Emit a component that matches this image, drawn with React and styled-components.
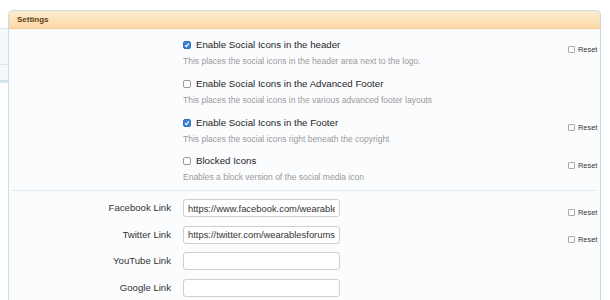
import styled, { createGlobalStyle } from "styled-components";

const Global = createGlobalStyle`
  html, body { margin: 0; padding: 0; background: #fff; }
  body { font-family: "Liberation Sans", Arial, sans-serif; color: #222; }
  * { box-sizing: border-box; }
`;

const Page = styled.div`
  display: flex;
  align-items: flex-start;
  width: 610px;
  height: 300px;
  overflow: hidden;
  padding-top: 10px;
`;

const Sidebar = styled.div`
  width: 8px;
  margin-top: 18px;
  display: flex;
  flex-direction: column;
  flex: none;
`;

const SideCell = styled.div`
  height: ${p => p.h}px;
  flex: none;
  background: ${p => p.bg || "#f4f9fb"};
  border-top: 1px solid #dbe8ee;
  border-bottom: ${p => p.thick ? "2px solid #d2e2e9" : "none"};
`;

const Panel = styled.div`
  width: 593px;
  flex: none;
  display: flex;
  flex-direction: column;
`;

const PanelHead = styled.div`
  flex: none;
  height: 19px;
  padding: 0 8px;
  display: flex;
  align-items: center;
  border: 1px solid #c9dde3;
  border-bottom: 1px solid #f3cc94;
  border-radius: 5px 5px 0 0;
  background: linear-gradient(#fdeccf, #fbd9a6);
  color: #5c3c16;
  font-weight: bold;
  font-size: 8px;
`;

const PanelBody = styled.div`
  flex: none;
  height: 290px;
  background: #fbfcfe;
  border-left: 1px solid #c9dde3;
  border-right: 1px solid #c9dde3;
  padding: 9px 1px 0 3px;
`;

const Row = styled.div`
  display: grid;
  grid-template-columns: 159px 1fr 32px;
  column-gap: 12px;
  align-items: start;
  height: ${p => p.h}px;
`;

const Divider = styled.div`
  height: 1px;
  background: #dfecef;
  margin: -3px 3px 8px 0;
`;

const RowLabel = styled.div`
  font-size: 9.6px;
  color: #333;
  text-align: right;
  line-height: 18px;
`;

const Option = styled.label`
  display: flex;
  align-items: center;
  gap: 5px;
  font-size: 9.7px;
  color: #1e1e1e;
  line-height: 14px;
`;

const Box = styled.span`
  width: 8px;
  height: 8px;
  border-radius: 2px;
  flex: none;
  display: flex;
  align-items: center;
  justify-content: center;
  background: ${p => p.checked ? "#3a80d4" : "#fff"};
  border: 1px solid ${p => p.checked ? "#2f6fbf" : "#9a9a9a"};
`;

const Hint = styled.div`
  font-size: 8.5px;
  color: #9a9a9a;
  margin-top: 4px;
  line-height: 10px;
`;

const ResetBox = styled.label`
  display: flex;
  align-items: center;
  gap: 3px;
  font-size: 7.4px;
  color: #333;
  margin-top: ${p => p.top}px;
  padding-left: 1px;
`;

const SmallBox = styled.span`
  width: 7px;
  height: 7px;
  border: 1px solid #a9a9a9;
  border-radius: 1px;
  background: #fff;
`;

const TextInput = styled.input`
  width: 157px;
  height: 18px;
  border: 1px solid #cfcfcf;
  border-radius: 3px;
  background: #fff;
  padding: 0 4px;
  font-family: "Liberation Sans", Arial, sans-serif;
  font-size: 9.4px;
  color: #333;
  outline: none;
`;

const Check = ({ checked }) => (
  <Box checked={checked}>
    {checked && (
      <svg width="6" height="6" viewBox="0 0 6 6">
        <path d="M1 3.2 L2.4 4.6 L5 1.4" fill="none" stroke="#fff" strokeWidth="1.1" />
      </svg>
    )}
  </Box>
);

const Reset = ({ top }) => (
  <ResetBox top={top}>
    <SmallBox />
    Reset
  </ResetBox>
);

const options = [
  { label: "Enable Social Icons in the header", hint: "This places the social icons in the header area next to the logo.", checked: true, reset: true },
  { label: "Enable Social Icons in the Advanced Footer", hint: "This places the social icons in the various advanced footer layouts", checked: false, reset: false },
  { label: "Enable Social Icons in the Footer", hint: "This places the social icons right beneath the copyright", checked: true, reset: true },
  { label: "Blocked Icons", hint: "Enables a block version of the social media icon", checked: false, reset: true },
];

const links = [
  { label: "Facebook Link", value: "https://www.facebook.com/wearablesforums", reset: true },
  { label: "Twitter Link", value: "https://twitter.com/wearablesforums", reset: true },
  { label: "YouTube Link", value: "", reset: false },
  { label: "Google Link", value: "", reset: false },
];

export default function App() {
  return (
    <>
      <Global />
      <Page>
        <Sidebar>
          <SideCell h={36} />
          <SideCell h={18} thick />
          <SideCell h={300} bg="#fff" />
        </Sidebar>
        <Panel>
          <PanelHead>Settings</PanelHead>
          <PanelBody>
            {options.map(o => (
              <Row key={o.label} h={38.8}>
                <div />
                <div>
                  <Option>
                    <Check checked={o.checked} />
                    {o.label}
                  </Option>
                  <Hint>{o.hint}</Hint>
                </div>
                {o.reset ? <Reset top={7} /> : <div />}
              </Row>
            ))}
            <Divider />
            {links.map(l => (
              <Row key={l.label} h={26.5}>
                <RowLabel>{l.label}</RowLabel>
                <TextInput readOnly value={l.value} />
                {l.reset ? <Reset top={9} /> : <div />}
              </Row>
            ))}
          </PanelBody>
        </Panel>
      </Page>
    </>
  );
}
